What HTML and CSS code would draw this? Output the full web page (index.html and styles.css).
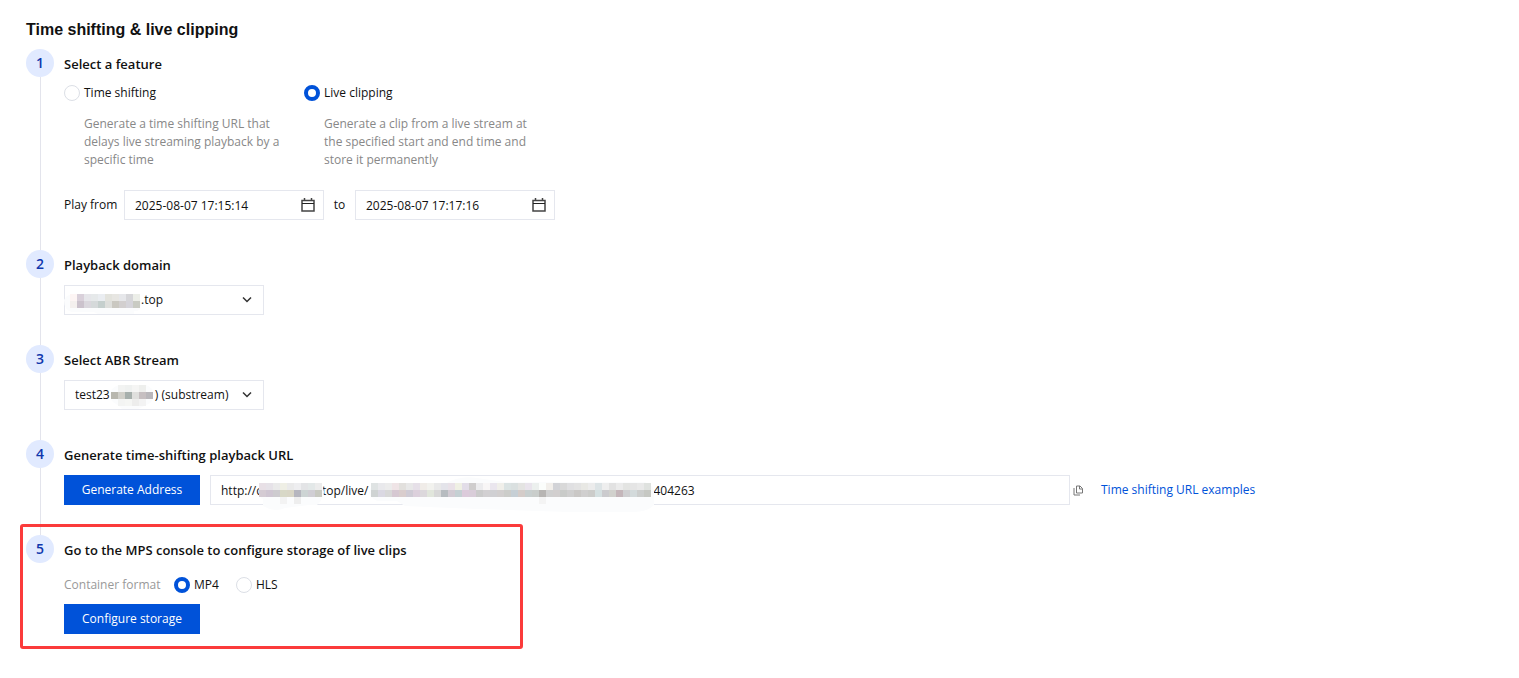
FILE: index.html
```
<!DOCTYPE html>
<html lang="en">
<head>
    <meta charset="UTF-8">
    <title>Time shifting &amp; live clipping</title>
    <link rel="stylesheet" href="styles.css">
</head>
<body>

<main class="page">
    <h1>Time shifting &amp; live clipping</h1>

    <ol class="steps">
        <li class="step">
            <span class="step-number">1</span>
            <div class="step-body">
                <h2>Select a feature</h2>
                <div class="features">
                    <div class="feature">
                        <label class="choice" for="timeShifting">
                            <input type="radio" name="feature" id="timeShifting">
                            Time shifting
                        </label>
                        <p>Generate a time shifting URL that delays live streaming playback by a specific time</p>
                    </div>
                    <div class="feature">
                        <label class="choice" for="liveClipping">
                            <input type="radio" name="feature" id="liveClipping" checked>
                            Live clipping
                        </label>
                        <p>Generate a clip from a live stream at the specified start and end time and store it permanently</p>
                    </div>
                </div>
                <div class="row">
                    <label class="label-from" for="startTime">Play from</label>
                    <div class="field">
                        <input type="text" id="startTime" value="2025-08-07 17:15:14">
                        <svg class="calendar" viewBox="0 0 14 14">
                            <path d="M1 2.5h12v10.5H1zM3.5 0v3M10.5 0v3" stroke="#444" stroke-width="1.5" />
                            <path d="M1 5.5h12" stroke="#222" />
                        </svg>
                    </div>
                    <label class="label-to" for="endTime">to</label>
                    <div class="field">
                        <input type="text" id="endTime" value="2025-08-07 17:17:16">
                        <svg class="calendar" viewBox="0 0 14 14">
                            <path d="M1 2.5h12v10.5H1zM3.5 0v3M10.5 0v3" stroke="#444" stroke-width="1.5" />
                            <path d="M1 5.5h12" stroke="#222" />
                        </svg>
                    </div>
                </div>
            </div>
        </li>

        <li class="step">
            <span class="step-number">2</span>
            <div class="step-body">
                <h2 id="domainTitle">Playback domain</h2>
                <div class="field">
                    <select class="domain-select" aria-labelledby="domainTitle">
                        <option>.top</option>
                    </select>
                    <svg class="arrow" viewBox="0 0 10 6"><path d="M1 0.5l4 4 4-4" /></svg>
                    <svg class="mosaic mosaic-domain" width="80" height="22">
                        <path class="halo" d="M0 8Q2 2 12 2H70Q77 4 77 12T70 19V22H34L30 20H8Q0 18 0 8z" />
                    </svg>
                </div>
            </div>
        </li>

        <li class="step">
            <span class="step-number">3</span>
            <div class="step-body">
                <h2 id="streamTitle">Select ABR Stream</h2>
                <div class="field">
                    <select aria-labelledby="streamTitle">
                        <option>test23&emsp;&emsp;&emsp;&ensp;&nbsp;) (substream)</option>
                    </select>
                    <svg class="arrow" viewBox="0 0 10 6"><path d="M1 0.5l4 4 4-4" /></svg>
                    <svg class="mosaic mosaic-stream" width="44" height="26">
                        <path class="halo" d="M0 10Q2 1 12 1H36Q43 3 43 11T36 21L28 25H12L8 21Q0 18 0 10z" />
                    </svg>
                </div>
            </div>
        </li>

        <li class="step">
            <span class="step-number">4</span>
            <div class="step-body">
                <h2 id="urlTitle">Generate time-shifting playback URL</h2>
                <div class="row">
                    <button class="btn" type="button">Generate Address</button>
                    <div class="field url-field">
                        <input type="text" aria-labelledby="urlTitle" value="http://c&emsp;&emsp;&emsp;&emsp;&emsp;top/live/&emsp;&emsp;&emsp;&emsp;&emsp;&emsp;&emsp;&emsp;&emsp;&emsp;&emsp;&emsp;&emsp;&emsp;&emsp;&emsp;&emsp;&emsp;&emsp;&emsp;&emsp;&emsp;&emsp;&ensp;&nbsp;404263">
                        <svg class="mosaic mosaic-host" width="68" height="36">
                            <path class="halo" d="M2 17Q2 9 12 9H60Q67 11 67 17T60 30H52L28 33Q18 38 6 31V24Q2 22 2 17z" />
                        </svg>
                        <svg class="mosaic mosaic-path" width="286" height="40">
                            <path class="halo" d="M0 17Q2 9 12 9H76Q90 0 108 3L136 7H276Q285 11 285 17V30Q280 36 266 37H200Q100 34 36 31L28 26H8Q0 22 0 17z" />
                        </svg>
                    </div>
                    <button class="copy" type="button" aria-label="Copy">
                        <svg viewBox="0 0 10 11"><path d="M3.5 1h3.5l2.5 2.5v4.5h-6zM6.5 1v3h3M1 3v7h6" /></svg>
                    </button>
                    <a class="examples" href="#">Time shifting URL examples</a>
                </div>
            </div>
        </li>

        <li class="step storage">
            <span class="step-number">5</span>
            <div class="step-body">
                <h2>Go to the MPS console to configure storage of live clips</h2>
                <div class="formats" role="radiogroup" aria-labelledby="formatLabel">
                    <span class="format-label" id="formatLabel">Container format</span>
                    <label class="choice" for="mp4"><input type="radio" name="format" id="mp4" checked> MP4</label>
                    <label class="choice" for="hls"><input type="radio" name="format" id="hls"> HLS</label>
                </div>
                <button class="btn" type="button">Configure storage</button>
            </div>
        </li>
    </ol>
</main>

<script src="script.js"></script>
</body>
</html>
```
FILE: styles.css
```
*,
*::before,
*::after {
    box-sizing: border-box;
}

body {
    margin: 0;
    background: #fff;
    color: #111;
    font: 12px/18px "Open Sans", "Noto Sans", sans-serif;
}

.page {
    padding: 20px 26px;
}

h1 {
    margin: 0 0 9px;
    font: bold 16px/20px "Liberation Sans", Arial, sans-serif;
}

h2 {
    margin: 0 0 5px;
    font-size: 13px;
    line-height: 30px;
    font-weight: 600;
}

/* Steps */
.steps {
    list-style: none;
    margin: 0;
    padding: 0;
}

.step {
    position: relative;
    display: flex;
    gap: 10px;
    padding-bottom: 30px;
}

.step:not(:last-child)::before {
    content: "";
    position: absolute;
    left: 14px;
    top: 28px;
    bottom: 0;
    width: 1px;
    background: #e3e4ec;
}

.step-number {
    flex: none;
    width: 28px;
    height: 28px;
    border-radius: 50%;
    background: #e1eaff;
    color: #0f37ad;
    font-size: 14px;
    font-weight: 600;
    line-height: 28px;
    text-align: center;
}

.step-body {
    flex: 1;
    min-width: 0;
}

/* Radios */
.choice {
    display: flex;
    align-items: center;
    gap: 4px;
}

.choice input {
    appearance: none;
    flex: none;
    width: 16px;
    height: 16px;
    margin: 0;
    border: 1px solid #dcdfe6;
    border-radius: 50%;
    background: #fff;
}

.choice input:checked {
    border: 4px solid #0052d9;
}

.features {
    display: flex;
}

.feature {
    width: 240px;
}

.feature p {
    margin: 13px 0 21px;
    padding: 0 16px 0 20px;
    color: #888;
}

/* Fields */
.row {
    display: flex;
    align-items: center;
}

.label-from {
    width: 60px;
}

.label-to {
    width: 31px;
    text-align: center;
}

.field {
    position: relative;
    width: 200px;
    height: 30px;
}

.field input,
.field select {
    appearance: none;
    width: 100%;
    height: 30px;
    padding: 0 10px;
    border: 1px solid #e5e7ee;
    border-radius: 0;
    background: #fff;
    color: #111;
    font: inherit;
}

.field .domain-select {
    padding-left: 76px;
}

.url-field {
    flex: 0 1 860px;
    margin-left: 10px;
}

.calendar {
    position: absolute;
    right: 9px;
    top: 8px;
    width: 14px;
    height: 14px;
    fill: none;
}

.arrow {
    position: absolute;
    right: 12px;
    top: 12px;
    width: 10px;
    height: 6px;
    fill: none;
    stroke: #333;
    stroke-width: 1.5;
}

.mosaic {
    position: absolute;
    top: 0;
    overflow: visible;
    pointer-events: none;
}

.halo {
    fill: #fbfcfd;
}

.mosaic-domain {
    left: 0;
    top: 7px;
}

.mosaic-stream {
    left: 46px;
    top: 4px;
}

.mosaic-host {
    left: 47px;
}

.mosaic-path {
    left: 159px;
}

/* Buttons and links */
.btn {
    min-width: 136px;
    height: 30px;
    padding: 0 16px;
    border: none;
    background: #0052d9;
    color: #fff;
    font: inherit;
    cursor: pointer;
}

.copy {
    display: flex;
    margin-left: 3px;
    padding: 0;
    border: none;
    background: none;
    cursor: pointer;
}

.copy svg {
    width: 10px;
    height: 11px;
    fill: none;
    stroke: #777;
}

.examples {
    margin-left: 18px;
    color: #0052d9;
    text-decoration: none;
    white-space: nowrap;
}

/* Storage */
.formats {
    display: flex;
    height: 30px;
    margin-bottom: 4px;
}

.format-label {
    width: 110px;
    color: #999;
    line-height: 30px;
}

.formats .choice {
    width: 62px;
}

.storage {
    padding-bottom: 0;
}

.storage::after {
    content: "";
    position: absolute;
    left: -6px;
    top: -11px;
    bottom: -15px;
    width: 503px;
    border: 3px solid #fb3b3b;
    border-radius: 3px;
    pointer-events: none;
}
```
FILE: script.js
```
// Colours of the masked blocks, one string per row, "-" for an empty cell
const CELL = 7;
const mosaics = [
    { target: '.mosaic-domain', x: 6, y: 2, rows: [
        'fdf5f4 d9d0da e6e6ea e6e9ea eaedf1 e3e3dd e7e6e2 e6e7ea d6d6d9 eceee8',
        'f4f0ee cbc2cc dad7dd d5d9da c5cfcd dedfdc cac8c1 d2cfcf d5d4da c9cbc3'
    ] },
    { target: '.mosaic-stream', x: 1, y: 1, rows: [
        '- f2f3f2 eff1f0 f5f5f4 eeefed -',
        'b8b7ae d0cfc9 a6afac dfdfdd c6bfc1 b9b7bb',
        '- f3f4f3 f5f6f4 ededec f3f3f3 -'
    ] },
    { target: '.mosaic-host', x: 2, y: 8, rows: [
        'e8e0e6 e6e2e8 eaeaea efefe5 eaeaea eeeef0 e3e4e6 e3e8e8 ececec',
        'd4cbd3 cfc6d2 cdcbcf d8d8c7 d9d6c6 b6b6bf cdd4d4 d0ced4 c8c9c1',
        '- - - f3f3f3 - eeeeee - - -'
    ] },
    { target: '.mosaic-path', x: 2, y: 8, rows: [
        'dfe3e3 e9e9ec ececec efe4e6 e2e0dd e8e8e8 e6e0e8 f0ece8 f2f2ee e9e9e9 e4e4ea e9e1e8 eff0e4 e2dde8 cfcdcd ececee f8f6f6 eae6ee f0efea dbe3e3 dae0e0 e4e4e2 e9e4ec ecf0ee fbfdfb f2efeb d2d3d7 d9d9d9 e0e0e2 e3e3e3 e8e8e4 ececec dde4e6 eeeeee e2e2e2 ebebeb e3e4e2 e5e5e5 e9e9e9 dfe2df',
        'cfd3d3 dad8e2 d8d8d8 d6c8d2 d9cdcd cfcbd5 dcd0dc dcd8dc e1e6dc d8d8d8 b7bcc0 d2cbd3 c5d0d3 dccbdb d9cdd9 cbcbcb d2d0d2 d0d0d3 d2cfcf cccdca c6cfd5 d4ccc9 c8cfcf c9cdcb b7b5b3 d0d0d0 d2cfcf c9cbc9 cfcfcf cac8c6 d0cfcf ccccca d5e0e1 cbcbce d1d1cd c4b6ba cfcfd1 d3dadb cccecd c6c8c3',
        '- - - - - - - - - - - - - - - - - - - - - - - - f4f4f4'
    ] }
];

mosaics.forEach(({ target, x, y, rows }) => {
    const svg = document.querySelector(target);
    rows.forEach((row, r) => {
        row.split(' ').forEach((color, c) => {
            if (color === '-') return;
            const rect = document.createElementNS('http://www.w3.org/2000/svg', 'rect');
            rect.setAttribute('x', x + c * CELL);
            rect.setAttribute('y', y + r * CELL);
            rect.setAttribute('width', CELL);
            rect.setAttribute('height', CELL);
            rect.setAttribute('fill', '#' + color);
            svg.appendChild(rect);
        });
    });
});
```
